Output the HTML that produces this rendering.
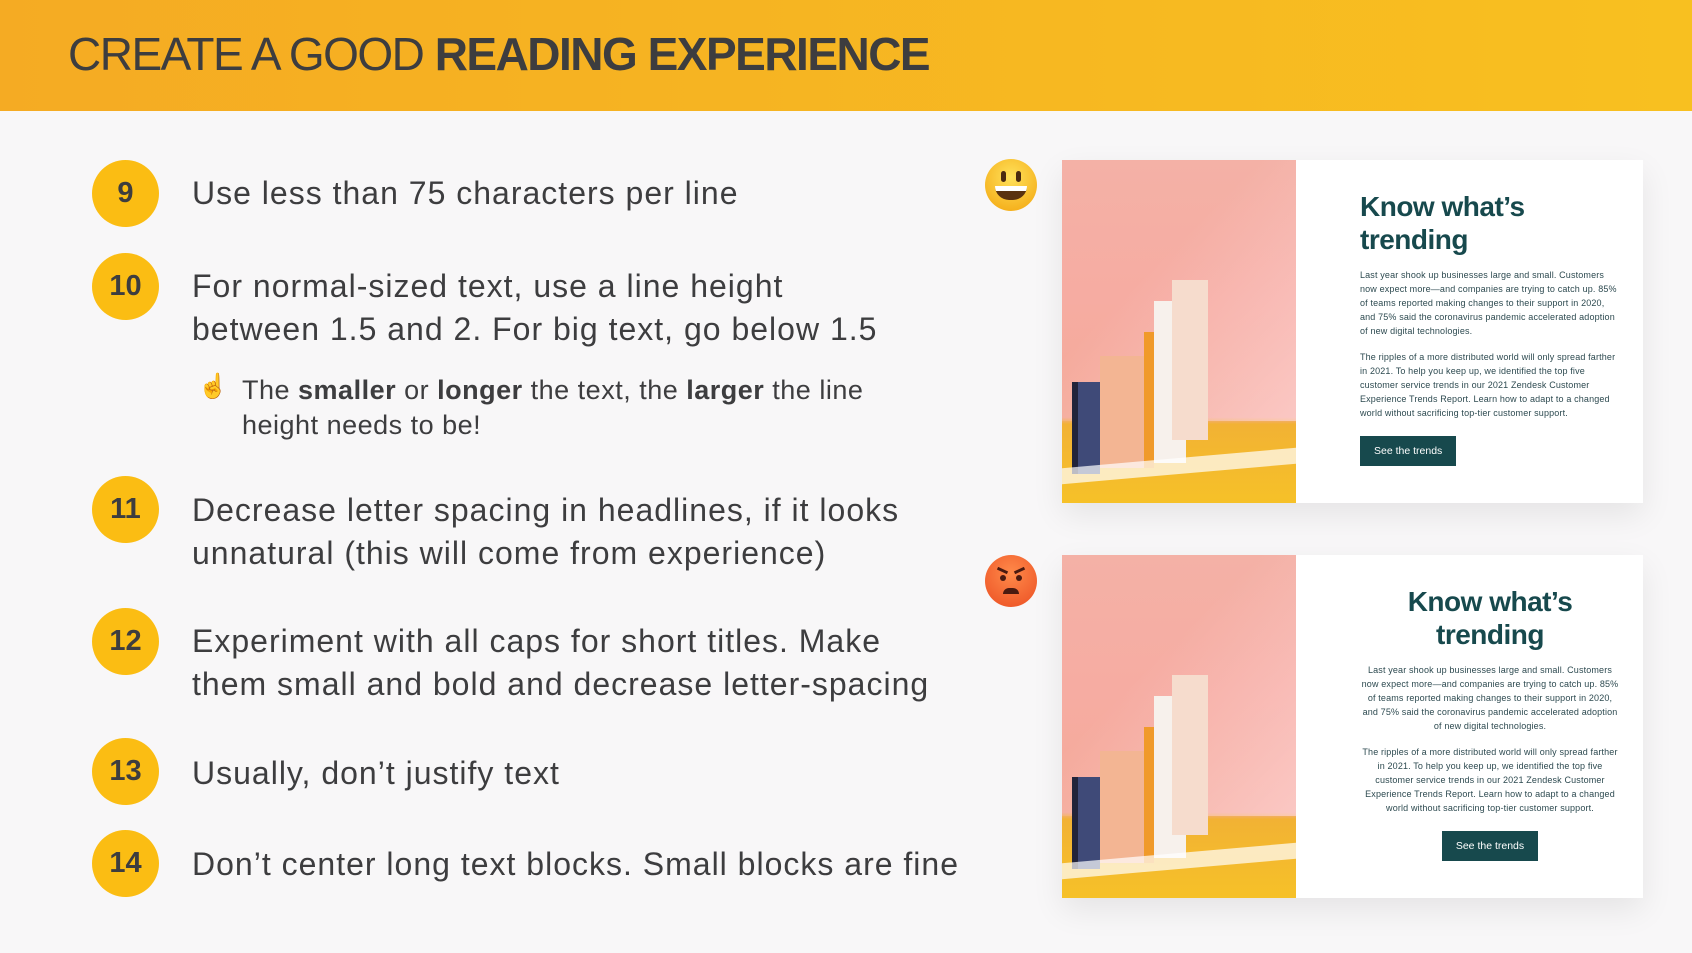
<!DOCTYPE html>
<html><head><meta charset="utf-8"><style>
*{margin:0;padding:0;box-sizing:border-box}
body{width:1692px;height:953px;background:#f8f7f8;font-family:"Liberation Sans",sans-serif;position:relative;overflow:hidden;color:#3d3d3f}
.hdr{position:absolute;left:0;top:0;width:1692px;height:111px;background:linear-gradient(90deg,#f5ab23,#f8c020)}
.hdr h1{position:absolute;left:68px;top:27px;font-size:46px;font-weight:400;color:#3d3d3f;letter-spacing:-1.5px;white-space:nowrap}
.hdr b{font-weight:700}
.c{position:absolute;left:92px;width:67px;height:67px;border-radius:50%;background:#fbbd13;font-weight:700;font-size:29px;text-align:center;line-height:67px;color:#3d3d3f}
.t{position:absolute;left:192px;font-size:32px;line-height:43px;white-space:nowrap;letter-spacing:1px}
.s{position:absolute;left:242px;top:373px;font-size:27px;line-height:35px;white-space:nowrap;letter-spacing:0.5px}
.hand{position:absolute;left:198px;top:372px;font-size:24px}
.emo{position:absolute;left:985px;width:52px;height:52px;border-radius:50%}
.card{position:absolute;left:1062px;width:581px;height:343px;background:#fff;box-shadow:0 12px 30px rgba(0,0,0,.08)}
.img{position:absolute;left:0;top:0;width:234px;height:100%;overflow:hidden;background:linear-gradient(180deg,#f4b1a6 0%,#f6aca2 40%,#f4a998 75%,#f2b234 77%,#f6c128 100%)}
.img .top{position:absolute;left:0;top:0;width:100%;height:76%;background:linear-gradient(135deg,rgba(255,255,255,0) 40%,rgba(255,220,225,.6) 100%)}
.bar{position:absolute}
.txt{position:absolute;left:298px;top:30px;width:275px;color:#17494d;white-space:nowrap}
.txt h2{font-size:28px;line-height:33px;font-weight:700;letter-spacing:-.5px}
.txt p{font-size:9px;line-height:14px;margin-top:12px;color:#2d4a50;letter-spacing:0.15px}
.btn{display:inline-block;margin-top:16px;background:#17494d;color:#fff;font-size:10.5px;padding:9px 14px}
.ctr{text-align:center;left:283px;width:290px}
</style></head><body>
<div class="hdr"><h1>CREATE A GOOD <b>READING EXPERIENCE</b></h1></div>

<div class="c" style="top:160px">9</div><div class="t" style="top:172px">Use less than 75 characters per line</div>
<div class="c" style="top:253px">10</div><div class="t" style="top:265px">For normal-sized text, use a line height<br>between 1.5 and 2. For big text, go below 1.5</div>
<div class="hand">☝️</div>
<div class="s">The <b>smaller</b> or <b>longer</b> the text, the <b>larger</b> the line<br>height needs to be!</div>
<div class="c" style="top:476px">11</div><div class="t" style="top:489px">Decrease letter spacing in headlines, if it looks<br>unnatural (this will come from experience)</div>
<div class="c" style="top:608px">12</div><div class="t" style="top:620px">Experiment with all caps for short titles. Make<br>them small and bold and decrease letter-spacing</div>
<div class="c" style="top:738px">13</div><div class="t" style="top:752px">Usually, don’t justify text</div>
<div class="c" style="top:830px">14</div><div class="t" style="top:843px">Don’t center long text blocks. Small blocks are fine</div>

<div class="emo" style="top:159px;background:radial-gradient(circle at 50% 35%,#ffe15a,#f5b01c 80%,#e08f10)">
<div style="position:absolute;left:16px;top:12px;width:5px;height:11px;border-radius:3px;background:#4a2a10"></div>
<div style="position:absolute;left:31px;top:12px;width:5px;height:11px;border-radius:3px;background:#4a2a10"></div>
<div style="position:absolute;left:10px;top:27px;width:32px;height:14px;border-radius:0 0 16px 16px;background:#5a3210;border-top:5px solid #fff"></div></div>
<div class="emo" style="top:555px;background:radial-gradient(circle at 50% 35%,#ff8a4a,#ef5a2a 80%,#d9431e)">
<div style="position:absolute;left:12px;top:14px;width:11px;height:3px;background:#4a1a10;transform:rotate(25deg)"></div>
<div style="position:absolute;left:29px;top:14px;width:11px;height:3px;background:#4a1a10;transform:rotate(-25deg)"></div>
<div style="position:absolute;left:15px;top:20px;width:6px;height:6px;border-radius:50%;background:#4a1a10"></div>
<div style="position:absolute;left:31px;top:20px;width:6px;height:6px;border-radius:50%;background:#4a1a10"></div>
<div style="position:absolute;left:18px;top:33px;width:16px;height:6px;border-radius:6px 6px 0 0;background:#4a1a10"></div></div>

<div class="card" style="top:160px">
 <div class="img"><div class="top"></div>
  <div class="bar" style="left:10px;top:222px;width:28px;height:92px;background:#3f4a78;border-left:6px solid #22243a"></div>
  <div class="bar" style="left:38px;top:196px;width:44px;height:112px;background:#f3b593"></div>
  <div class="bar" style="left:82px;top:172px;width:10px;height:136px;background:#f09a2a"></div>
  <div class="bar" style="left:92px;top:141px;width:32px;height:162px;background:#f7f1ec"></div>
  <div class="bar" style="left:110px;top:120px;width:36px;height:160px;background:#f6dccd"></div>
  <div class="bar" style="left:0;top:298px;width:234px;height:16px;background:rgba(255,255,255,.7);transform:skewY(-5deg)"></div>
 </div>
 <div class="txt"><h2>Know what’s<br>trending</h2>
 <p>Last year shook up businesses large and small. Customers<br>now expect more—and companies are trying to catch up. 85%<br>of teams reported making changes to their support in 2020,<br>and 75% said the coronavirus pandemic accelerated adoption<br>of new digital technologies.</p>
 <p>The ripples of a more distributed world will only spread farther<br>in 2021. To help you keep up, we identified the top five<br>customer service trends in our 2021 Zendesk Customer<br>Experience Trends Report. Learn how to adapt to a changed<br>world without sacrificing top-tier customer support.</p>
 <span class="btn">See the trends</span></div>
</div>

<div class="card" style="top:555px">
 <div class="img"><div class="top"></div>
  <div class="bar" style="left:10px;top:222px;width:28px;height:92px;background:#3f4a78;border-left:6px solid #22243a"></div>
  <div class="bar" style="left:38px;top:196px;width:44px;height:112px;background:#f3b593"></div>
  <div class="bar" style="left:82px;top:172px;width:10px;height:136px;background:#f09a2a"></div>
  <div class="bar" style="left:92px;top:141px;width:32px;height:162px;background:#f7f1ec"></div>
  <div class="bar" style="left:110px;top:120px;width:36px;height:160px;background:#f6dccd"></div>
  <div class="bar" style="left:0;top:298px;width:234px;height:16px;background:rgba(255,255,255,.7);transform:skewY(-5deg)"></div>
 </div>
 <div class="txt ctr"><h2>Know what’s<br>trending</h2>
 <p>Last year shook up businesses large and small. Customers<br>now expect more—and companies are trying to catch up. 85%<br>of teams reported making changes to their support in 2020,<br>and 75% said the coronavirus pandemic accelerated adoption<br>of new digital technologies.</p>
 <p>The ripples of a more distributed world will only spread farther<br>in 2021. To help you keep up, we identified the top five<br>customer service trends in our 2021 Zendesk Customer<br>Experience Trends Report. Learn how to adapt to a changed<br>world without sacrificing top-tier customer support.</p>
 <span class="btn">See the trends</span></div>
</div>
</body></html>
